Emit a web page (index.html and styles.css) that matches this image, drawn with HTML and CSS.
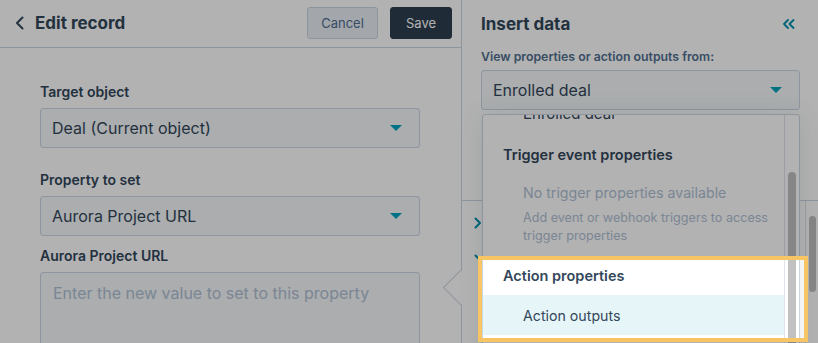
FILE: index.html
```html
<!DOCTYPE html>
<html lang="en">
<head>
  <meta charset="UTF-8" />
  <meta name="viewport" content="width=device-width, initial-scale=1.0" />
  <title>Edit record</title>
  <link rel="stylesheet" href="styles.css">
</head>
<body>
  <div class="app">
    <section class="editor">
      <header class="editor-head">
        <a href="#" class="back">
          <svg width="9" height="14" viewBox="0 0 9 14"><path d="M7.5 1.5 2 7l5.5 5.5" fill="none" stroke="#33475b" stroke-width="2" stroke-linecap="round" stroke-linejoin="round"/></svg>
          <span>Edit record</span>
        </a>
        <div class="head-actions">
          <button class="btn btn-secondary">Cancel</button>
          <button class="btn btn-primary">Save</button>
        </div>
      </header>
      <div class="editor-body">
        <div class="field">
          <label>Target object</label>
          <div class="select">Deal (Current object)<span class="caret"></span></div>
        </div>
        <div class="field">
          <label>Property to set</label>
          <div class="select">Aurora Project URL<span class="caret"></span></div>
        </div>
        <div class="field field-value">
          <label>Aurora Project URL</label>
          <div class="textarea">Enter the new value to set to this property</div>
        </div>
      </div>
    </section>

    <aside class="insert-panel">
      <span class="panel-arrow"></span>
      <div class="insert-head">
        <h2>Insert data</h2>
        <svg width="13" height="10" viewBox="0 0 13 10"><path d="M6 1 2 5l4 4M11.5 1l-4 4 4 4" fill="none" stroke="#0091ae" stroke-width="1.8" stroke-linecap="round" stroke-linejoin="round"/></svg>
      </div>
      <div class="insert-source">
        <label>View properties or action outputs from:</label>
        <div class="select">Enrolled deal<span class="caret"></span></div>
      </div>
      <div class="insert-body">
        <div class="accordion">
          <div class="acc-row">
            <svg width="8" height="12" viewBox="0 0 8 12"><path d="M1.5 1.5 6 6l-4.5 4.5" fill="none" stroke="#0091ae" stroke-width="2" stroke-linecap="round" stroke-linejoin="round"/></svg>
          </div>
          <div class="acc-row">
            <svg width="12" height="8" viewBox="0 0 12 8"><path d="M1.5 1.5 6 6l4.5-4.5" fill="none" stroke="#0091ae" stroke-width="2" stroke-linecap="round" stroke-linejoin="round"/></svg>
          </div>
        </div>
        <div class="scroll-track"><div class="scroll-thumb"></div></div>
      </div>

      <div class="source-menu">
        <div class="menu-list">
          <div class="menu-item first">Enrolled deal</div>
          <div class="menu-group">Trigger event properties</div>
          <div class="menu-empty">
            <div class="empty-title">No trigger properties available</div>
            <div class="empty-help">Add event or webhook triggers to access trigger properties</div>
          </div>
          <div class="menu-group">Action properties</div>
          <div class="menu-item active">Action outputs</div>
        </div>
        <div class="scroll-track menu-track"><div class="scroll-thumb"></div></div>
      </div>
    </aside>

    <div class="spotlight"></div>
  </div>
</body>
</html>
```

FILE: styles.css
```css
* { margin: 0; padding: 0; box-sizing: border-box; }
body {
  background: #fff;
  font-family: 'Inter', 'Noto Sans', sans-serif;
  color: #33475b;
  overflow: hidden;
}
a { color: inherit; text-decoration: none; }
button { font-family: inherit; }

.app {
  position: relative;
  display: flex;
  width: 818px; height: 343px;
  overflow: hidden;
}

/* left: edit record */
.editor { width: 461px; flex-shrink: 0; }
.editor-head {
  height: 48px;
  display: flex; align-items: center; justify-content: space-between;
  padding: 0 9px 1px 15px;
  border-bottom: 1px solid #cbd6e2;
}
.back { display: flex; align-items: center; gap: 11px; font-size: 17px; font-weight: 700; }
.head-actions { display: flex; gap: 12px; }
.btn { height: 32px; border-radius: 3px; font-size: 13px; cursor: pointer; }
.btn-secondary { width: 71px; background: #eaf0f6; border: 1px solid #cbd6e2; color: #506e91; }
.btn-primary { width: 62px; background: #2d3e50; border: 1px solid #2d3e50; color: #fff; }

.editor-body { padding: 34px 41px 0 40px; }
.field label { display: block; font-size: 14px; font-weight: 600; line-height: 20px; margin-bottom: 6px; }
.field + .field { margin-top: 22px; }
.field.field-value { margin-top: 10px; }

.select {
  height: 40px;
  display: flex; align-items: center; justify-content: space-between;
  padding: 0 17px 0 11px;
  background: #f5f8fa;
  border: 1px solid #cbd6e2;
  border-radius: 3px;
  font-size: 16px;
}
.caret {
  width: 0; height: 0;
  border-left: 6px solid transparent;
  border-right: 6px solid transparent;
  border-top: 6px solid #00a4bd;
}
.textarea {
  height: 110px;
  padding: 9px 12px;
  background: #f5f8fa;
  border: 1px solid #cbd6e2;
  border-radius: 3px;
  font-size: 16px; line-height: 22px;
  color: #b0c1d4;
}

/* right: insert data panel */
.insert-panel {
  position: relative;
  flex: 1;
  border-left: 1px solid #cbd6e2;
  display: flex; flex-direction: column;
}
.panel-arrow {
  position: absolute;
  left: -14px; top: 275px;
  width: 25px; height: 25px;
  background: #fff;
  border-left: 1px solid #cbd6e2;
  border-bottom: 1px solid #cbd6e2;
  transform: rotate(45deg);
}
.insert-head {
  height: 47px;
  display: flex; align-items: center; justify-content: space-between;
  padding: 0 23px 0 19px;
}
.insert-head h2 { font-size: 17px; font-weight: 700; }
.insert-source { padding: 0 18px 0 19px; }
.insert-source label { display: block; font-size: 12.3px; font-weight: 600; line-height: 20px; color: #516f90; margin-bottom: 3px; }
.insert-body {
  flex: 1;
  display: flex;
  margin-top: 90px;
  border-top: 1px solid #cbd6e2;
}
.accordion { flex: 1; padding-top: 4px; }
.acc-row { height: 35px; display: flex; align-items: center; padding-left: 12px; }
.scroll-track { width: 13px; border-left: 1px solid #dfe3eb; flex-shrink: 0; }
.scroll-thumb { width: 7px; height: 76px; margin: 15px 0 0 3px; border-radius: 4px; background: #c1c1c1; }

/* dropdown menu */
.source-menu {
  position: absolute;
  left: 20px; top: 114px;
  width: 318px; height: 260px;
  display: flex;
  background: #fff;
  border: 1px solid #cbd6e2;
  border-radius: 3px;
  box-shadow: 0 1px 24px rgba(45, 62, 80, 0.12);
  z-index: 2;
}
.menu-list { flex: 1; overflow: hidden; }
.menu-item { height: 40px; display: flex; align-items: center; padding-left: 40px; font-size: 14.2px; }
.menu-item.first { margin-top: -22px; font-size: 15px; }
.menu-item.active { background: #e5f5f8; }
.menu-group { height: 40px; display: flex; align-items: center; padding-left: 20px; font-size: 14.5px; font-weight: 600; margin-top: 1px; }
.menu-empty { padding: 8px 8px 9px 40px; color: #b0c1d4; }
.empty-title { font-size: 14.2px; line-height: 22px; margin-bottom: 5px; }
.empty-help { font-size: 12.6px; line-height: 18px; }
.menu-track { width: 15px; }
.menu-track .scroll-thumb { width: 8px; height: 220px; margin: 57px 0 0 3px; }

/* guided tour highlight */
.spotlight {
  position: absolute;
  left: 478px; top: 256px;
  width: 330px; height: 86px;
  border: 4px solid #f7c563;
  box-shadow: 0 0 0 1200px rgba(0, 0, 0, 0.3);
  z-index: 10;
  pointer-events: none;
}
```
